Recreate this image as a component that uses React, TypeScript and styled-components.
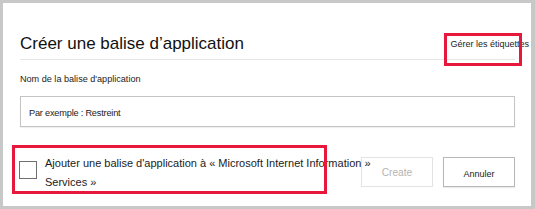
import React from "react";
import styled, { createGlobalStyle } from "styled-components";

const Global = createGlobalStyle`
  html, body { margin: 0; padding: 0; background: #c8c8c8; }
  body { font-family: "Liberation Sans", Arial, sans-serif; color: #1b1b1b; }
  * { box-sizing: border-box; }
`;

const Frame = styled.div`
  width: 535px;
  height: 209px;
  padding: 3px 4px 3px 3px;
  background: #c8c8c8;
`;

const Panel = styled.div`
  position: relative;
  height: 100%;
  background: #ffffff;
  padding: 29px 16px 0 17px;
  display: flex;
  flex-direction: column;
`;

const Header = styled.div`
  display: flex;
  align-items: flex-end;
  justify-content: space-between;
  padding-bottom: 3px;
  border-bottom: 1px solid #e6e6e6;
`;

const Title = styled.h1`
  margin: 0;
  font-size: 17px;
  line-height: 24px;
  font-weight: 400;
  color: #111;
`;

const ManageLink = styled.a`
  font-size: 9px;
  line-height: 12px;
  color: #1b1b1b;
  margin-right: -14px;
  margin-bottom: 6px;
  white-space: nowrap;
  text-decoration: none;
`;

const FieldLabel = styled.label`
  margin-top: 12px;
  font-size: 9.1px;
  line-height: 14px;
  color: #1b1b1b;
`;

const TextInput = styled.input`
  margin-top: 10px;
  height: 31px;
  width: 100%;
  border: 1px solid #c4c4c4;
  box-shadow: 0 1px 1px rgba(0, 0, 0, 0.06);
  padding: 3px 0 0 8px;
  font-family: inherit;
  font-size: 9.2px;
  letter-spacing: -0.2px;
  outline: none;
  &::placeholder { color: #1b1b1b; opacity: 1; }
`;

const BottomRow = styled.div`
  margin-top: 30px;
  display: grid;
  grid-template-columns: minmax(0, 1fr) auto;
  align-items: start;
`;

const CheckArea = styled.div`
  display: flex;
  align-items: flex-start;
  gap: 8px;
`;

const CheckBox = styled.span`
  flex: 0 0 auto;
  width: 18px;
  height: 18px;
  margin: 4px 0 0 -1px;
  border: 1.5px solid #6f6f6f;
  background: #fff;
`;

const CheckText = styled.span`
  flex: 0 0 auto;
  width: 338px;
  margin-top: -3px;
  font-size: 11px;
  line-height: 19px;
  color: #1b1b1b;
`;

const Buttons = styled.div`
  display: flex;
  gap: 10px;
`;

const Button = styled.button<{ $disabled?: boolean }>`
  width: 72px;
  height: 30px;
  padding: ${(p) => (p.$disabled ? "0" : "3px 0 0")};
  background: transparent;
  font-family: inherit;
  font-size: ${(p) => (p.$disabled ? "10.2px" : "9px")};
  color: ${(p) => (p.$disabled ? "#b4b4b4" : "#1b1b1b")};
  border: 1px solid ${(p) => (p.$disabled ? "#e3e3e3" : "#b8b8b8")};
  box-shadow: ${(p) => (p.$disabled ? "none" : "0 1px 1px rgba(0,0,0,0.08)")};
`;

const Highlight = styled.div<{ $l: number; $t: number; $w: number; $h: number }>`
  position: absolute;
  left: ${(p) => p.$l}px;
  top: ${(p) => p.$t}px;
  width: ${(p) => p.$w}px;
  height: ${(p) => p.$h}px;
  border: 3px solid #e8173c;
  pointer-events: none;
`;

export default function App() {
  return (
    <Frame>
      <Global />
      <Panel>
        <Header>
          <Title>Créer une balise d’application</Title>
          <ManageLink>Gérer les étiquettes</ManageLink>
        </Header>
        <FieldLabel>Nom de la balise d'application</FieldLabel>
        <TextInput placeholder="Par exemple : Restreint" />
        <BottomRow>
          <CheckArea>
            <CheckBox />
            <CheckText>
              Ajouter une balise d'application à « Microsoft Internet Information » Services »
            </CheckText>
          </CheckArea>
          <Buttons>
            <Button $disabled>Create</Button>
            <Button>Annuler</Button>
          </Buttons>
        </BottomRow>
        <Highlight $l={441} $t={30} $w={78} $h={33} />
        <Highlight $l={9} $t={142} $w={315} $h={49} />
      </Panel>
    </Frame>
  );
}
